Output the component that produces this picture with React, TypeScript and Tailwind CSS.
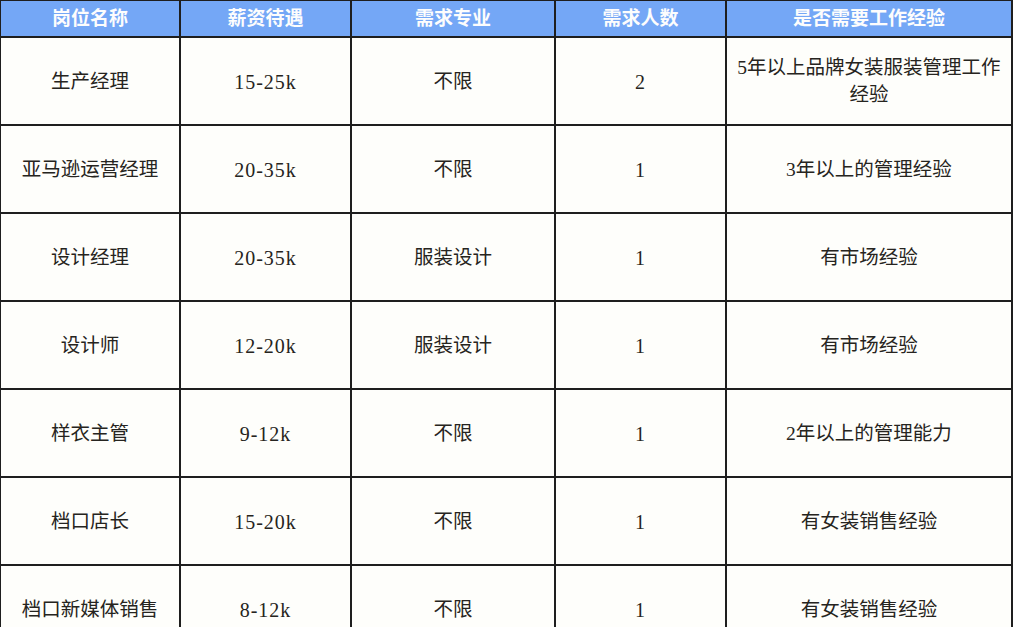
import React from "react";

const headers = ["岗位名称", "薪资待遇", "需求专业", "需求人数", "是否需要工作经验"];
const rows: string[][] = [
  ["生产经理", "15-25k", "不限", "2", "5年以上品牌女装服装管理工作经验"],
  ["亚马逊运营经理", "20-35k", "不限", "1", "3年以上的管理经验"],
  ["设计经理", "20-35k", "服装设计", "1", "有市场经验"],
  ["设计师", "12-20k", "服装设计", "1", "有市场经验"],
  ["样衣主管", "9-12k", "不限", "1", "2年以上的管理能力"],
  ["档口店长", "15-20k", "不限", "1", "有女装销售经验"],
  ["档口新媒体销售", "8-12k", "不限", "1", "有女装销售经验"],
];

const isAscii = (s: string) => /^[\x00-\x7f]+$/.test(s);

export default function App() {
  return (
    <div
      className="w-[1013px] h-[627px] overflow-hidden bg-white"
      style={{ fontFamily: '"Liberation Serif", "Noto Sans CJK SC", serif' }}
    >
      <div className="grid grid-cols-[178px_169px_202px_169px_284px] gap-[2px] bg-[#1e1e1e] pl-[1px] pr-[2px] border-t border-[#1e1e1e]">
        {headers.map((h) => (
          <div
            key={h}
            className="h-[35px] bg-[#74a7f6] flex items-center justify-center text-[#fdfdfd] font-bold text-[19px] leading-none"
          >
            {h}
          </div>
        ))}
        {rows.map((r, i) =>
          r.map((c, j) => (
            <div
              key={i + "-" + j}
              className="h-[86px] bg-[#fefefb] flex items-center justify-center text-center text-[#262420] text-[19.5px] leading-[27px] px-[8px]"
            >
              {isAscii(c) ? (
                <span className="text-[20px] tracking-[1px] pt-[2px]">{c}</span>
              ) : (
                c
              )}
            </div>
          ))
        )}
      </div>
    </div>
  );
}
